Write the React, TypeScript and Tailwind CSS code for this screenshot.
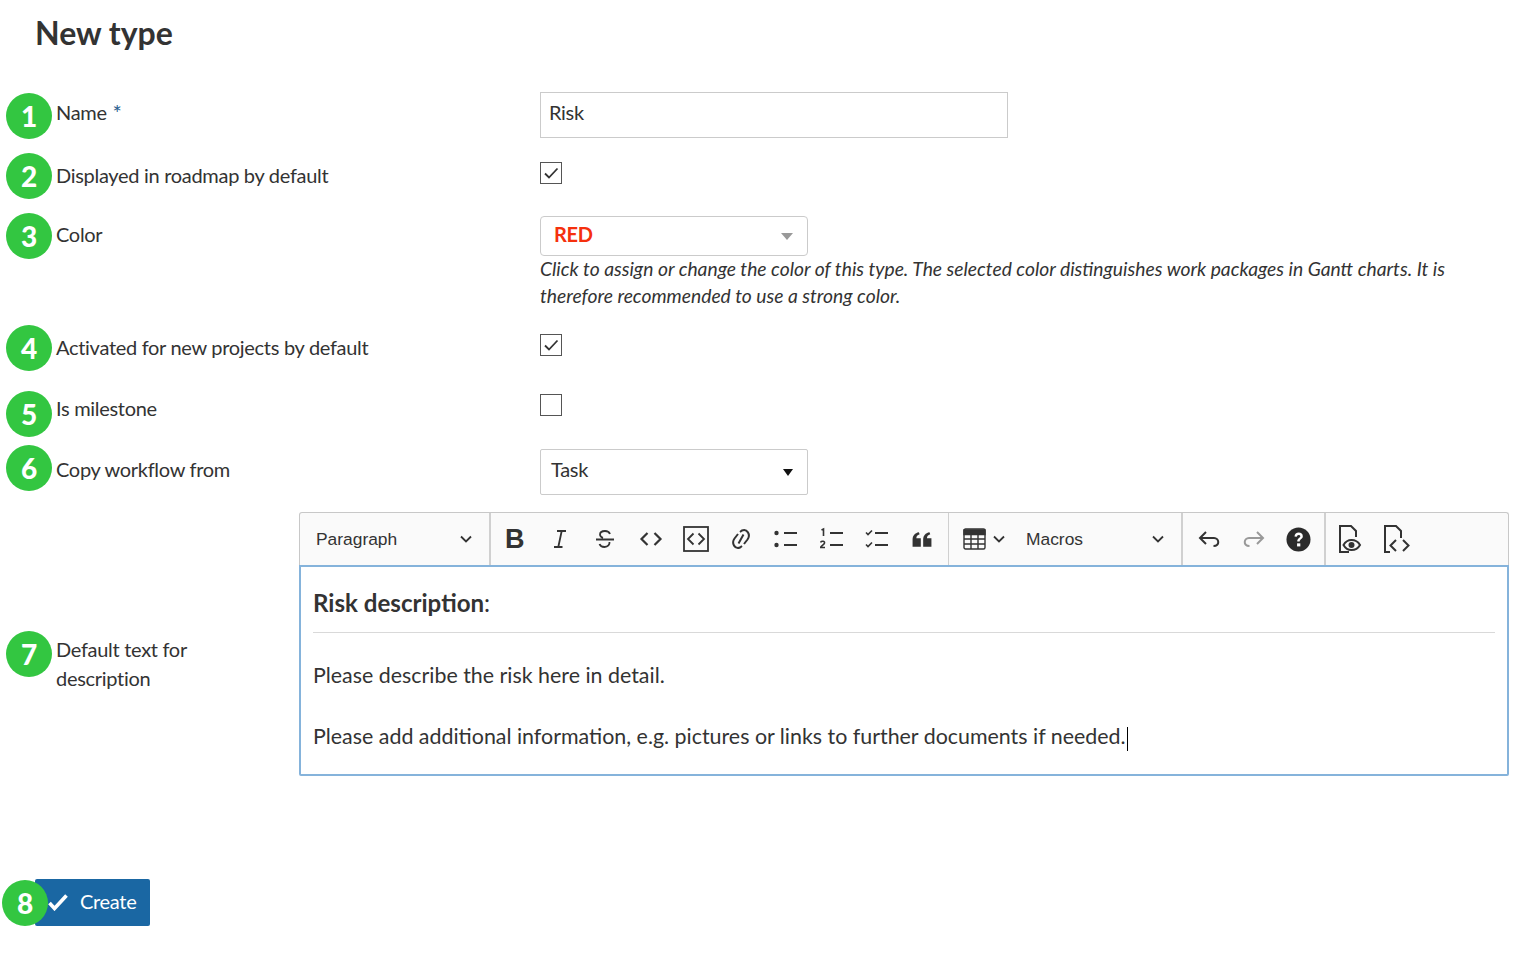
import React from "react";

const Badge = ({ n, className }: { n: number; className: string }) => (
  <div className={`absolute flex h-[46px] w-[46px] items-center justify-center rounded-full bg-[#33c641] text-[28px] font-black text-white ${className}`}>
    {n}
  </div>
);

const Checkbox = ({ checked }: { checked?: boolean }) => (
  <div className="flex h-[22px] w-[22px] items-center justify-center border border-[#555] bg-white">
    {checked && (
      <svg width="16" height="14" viewBox="0 0 16 14" fill="none" stroke="#333" strokeWidth="1.8">
        <path d="M2 7.5l4 4L14.5 2.5" />
      </svg>
    )}
  </div>
);

const Row = ({ label, children, className }: { label: React.ReactNode; children: React.ReactNode; className?: string }) => (
  <div className={`flex ${className ?? ""}`}>
    <div className="w-[484px] shrink-0">{label}</div>
    <div className="min-w-0 flex-1">{children}</div>
  </div>
);

const Chevron = ({ className }: { className?: string }) => (
  <svg className={className} width="12" height="8" viewBox="0 0 12 8" fill="none" stroke="#333" strokeWidth="1.8">
    <path d="M1 1.5l5 5 5-5" />
  </svg>
);

const Tool = ({ children }: { children: React.ReactNode }) => (
  <div className="flex h-full w-[45.3px] shrink-0 items-center justify-center">{children}</div>
);

const svgProps = { width: 28, height: 28, viewBox: "0 0 28 28", fill: "none", stroke: "#333" };
const listProps = { width: 24, height: 24, viewBox: "0 0 24 24", fill: "none", stroke: "#333" };

export default function App() {
  return (
    <div className="relative h-[961px] w-[1525px] overflow-hidden bg-white font-['Lato',sans-serif] text-[20px] tracking-[-0.3px] text-[#333]">
      <h1 className="pl-[35px] pt-[13px] text-[32px] leading-[40px] font-bold tracking-normal text-[#333]">New type</h1>

      <div className="pl-[56px] pt-[39px]">
        <Row label={<div className="pt-[6px] leading-[28px]">Name <span className="relative top-[1px] ml-[1px] text-[22px] text-[#2a5f8f]">*</span></div>}>
          <div className="flex h-[46px] w-[468px] items-center border border-[#cbcbcb] px-[8px] pb-[7px]">Risk</div>
        </Row>
        <Row className="mt-[24px]" label={<div className="-mt-[1px] leading-[28px]">Displayed in roadmap by default</div>}>
          <Checkbox checked />
        </Row>
        <Row className="mt-[27px]" label={<div className="pt-[4px] leading-[28px]">Color</div>}>
          <div className="flex h-[40px] w-[268px] items-center justify-between rounded-[4px] border border-[#cbcbcb] pb-[4px] pl-[13px] pr-[14px]">
            <span className="font-bold text-[#f5300d]">RED</span>
            <span className="mt-[4px] h-0 w-0 border-x-[6.5px] border-t-[7px] border-x-transparent border-t-[#999]" />
          </div>
          <p className="-mt-[1px] text-[19.27px] leading-[27px] tracking-normal italic">
            Click to assign or change the color of this type. The selected color distinguishes work packages in Gantt charts. It is
            <br />
            therefore recommended to use a strong color.
          </p>
        </Row>
        <Row className="mt-[25px]" label={<div className="-mt-[1px] leading-[28px]">Activated for new projects by default</div>}>
          <Checkbox checked />
        </Row>
        <Row className="mt-[33px]" label={<div className="leading-[28px]">Is milestone</div>}>
          <Checkbox />
        </Row>
        <Row className="mt-[27px]" label={<div className="pt-[6px] leading-[28px]">Copy workflow from</div>}>
          <div className="flex h-[46px] w-[268px] items-center justify-between rounded-[2px] border border-[#cbcbcb] pb-[6px] pl-[10px] pr-[14px]">
            <span>Task</span>
            <span className="mt-[6px] h-0 w-0 border-x-[5px] border-t-[7px] border-x-transparent border-t-[#111]" />
          </div>
        </Row>
      </div>

      <div className="flex pl-[56px] pt-[17px]">
        <div className="flex w-[243px] shrink-0 flex-col justify-center pt-[39px] leading-[29px]">
          <div>Default text for</div>
          <div>description</div>
        </div>
        <div className="w-[1210px]">
          <div className="flex h-[53px] items-stretch rounded-t-[3px] border border-b-0 border-[#c8c8c8] bg-[#fafafa]">
            <div className="flex w-[191px] items-center justify-between border-r-2 border-[#d0d0d0] pl-[16px] pr-[17px] font-['Liberation_Sans',sans-serif] text-[17.4px] tracking-normal">
              Paragraph
              <Chevron />
            </div>
            <div className="flex w-[458px] items-center border-r border-[#d0d0d0] pl-[1px]">
              <Tool>
                <span className="font-['Liberation_Sans',sans-serif] text-[27px] font-bold">B</span>
              </Tool>
              <Tool>
                <svg {...svgProps} strokeWidth="1.8">
                  <path d="M11 6h9M15.7 6l-3.4 16M8 22h8.5" />
                </svg>
              </Tool>
              <Tool>
                <svg {...svgProps} strokeWidth="1.8">
                  <path d="M19 9c-.8-2-2.6-3-5-3-3 0-5 1.400-5 3.600 0 1.600 1 2.600 3 3.200M5 14.500h18M18.500 17c.3 2.600-1.500 5-5 5-2.500 0-4.300-1-5-3" />
                </svg>
              </Tool>
              <Tool>
                <svg {...svgProps} strokeWidth="2.2">
                  <path d="M10.500 8L4.500 14l6 6M17.500 8l6 6-6 6" />
                </svg>
              </Tool>
              <Tool>
                <svg width="26" height="26" viewBox="0 0 26 26" fill="none" stroke="#333">
                  <rect x="1" y="1" width="24" height="24" strokeWidth="1.800" />
                  <path d="M10.500 7.500L5 13l5.500 5.500M15.500 7.500L21 13l-5.500 5.500" strokeWidth="1.800" />
                </svg>
              </Tool>
              <Tool>
                <svg {...svgProps} strokeWidth="2">
                  <path d="M11 9l-3.500 4.500c-3.500 5 .5 11 5.500 9l2-1.500M17 19l3.500-4.500c3.500-5-.5-11-5.500-9l-2 1.500M11.500 18.500l5-9" />
                </svg>
              </Tool>
              <Tool>
                <svg {...listProps} strokeWidth="2">
                  <circle cx="2.500" cy="6" r="2.200" fill="#333" stroke="none" />
                  <circle cx="2.500" cy="18" r="2.200" fill="#333" stroke="none" />
                  <path d="M10 6h13M10 18h13" />
                </svg>
              </Tool>
              <Tool>
                <svg {...listProps} strokeWidth="2">
                  <path d="M10 6h13M10 18h13" />
                  <path d="M1.500 3l2-1v7" strokeWidth="1.600" />
                  <path d="M0.500 15.500c1-2 4.500-1.600 4 .5-.3 1.500-3 2.500-4 4.500h4.500" strokeWidth="1.500" />
                </svg>
              </Tool>
              <Tool>
                <svg {...listProps} strokeWidth="2">
                  <path d="M10 6h13M10 18h13" />
                  <path d="M1 5.500l2 2L7 3.500M1 17.500l2 2L7 15.500" strokeWidth="1.600" />
                </svg>
              </Tool>
              <Tool>
                <svg width="22" height="22" viewBox="0 0 28 28" stroke="none" fill="#333">
                  <path d="M2 24v-9C2 9.500 5 6.500 10 5.500l1 2.500C8 9 7 10.500 6.800 13H12.500v11zM15.500 24v-9c0-5.500 3-8.500 8-9.500l1 2.500c-3 1-4 2.500-4.200 5H26v11z" />
                </svg>
              </Tool>
            </div>
            <div className="flex w-[234px] items-center border-r-2 border-[#d0d0d0] pl-[14px] font-['Liberation_Sans',sans-serif] text-[17.4px] tracking-normal">
              <svg width="23" height="22" viewBox="0 0 23 22" fill="none" stroke="#333" strokeWidth="1.400">
                <rect x="1" y="1" width="21" height="20" rx="1.500" />
                <path d="M1 2h21v4.500H1z" fill="#333" />
                <path d="M1 11h21M1 16h21M8 6v15M15 6v15" />
              </svg>
              <Chevron className="ml-[7px]" />
              <span className="ml-[21px] w-[126px]">Macros</span>
              <Chevron />
            </div>
            <div className="flex w-[143px] items-center border-r-2 border-[#d0d0d0] pl-[4px]">
              <Tool>
                <svg {...svgProps} strokeWidth="2">
                  <path d="M10 7l-6 6 6 6M4 13h14c5 0 6.500 8-.5 8" />
                </svg>
              </Tool>
              <div className="-ml-[2px]">
                <Tool>
                  <svg {...svgProps} stroke="#999" strokeWidth="2">
                    <path d="M18 7l6 6-6 6M24 13H10c-5 0-6.500 8 .5 8" />
                  </svg>
                </Tool>
              </div>
              <Tool>
                <svg width="25" height="25" viewBox="0 0 26 26">
                  <circle cx="13" cy="13" r="12.500" fill="#2b2b2b" />
                  <path d="M8.800 10c.2-2.800 2-4.200 4.400-4.200 2.500 0 4.300 1.500 4.300 3.700 0 3-3.300 3-3.300 5.700h-2.500c0-3.700 3.200-3.800 3.200-5.500 0-.9-.7-1.500-1.700-1.500-1.200 0-1.800.8-2 2z" fill="#fff" />
                  <rect x="11.500" y="17" width="3.400" height="3.200" fill="#fff" />
                </svg>
              </Tool>
            </div>
            <div className="flex items-center pl-[2px]">
              <Tool>
                <svg {...svgProps} strokeWidth="2">
                  <path d="M12 27H3V1h11l5 5v6" />
                  <path d="M6.500 20c2-3.500 4.800-5 8-5s6.500 1.500 8.500 5c-2 3.500-5.300 5-8.500 5s-6-1.500-8-5z" />
                  <circle cx="14.500" cy="20" r="3" fill="#333" stroke="none" />
                </svg>
              </Tool>
              <Tool>
                <svg {...svgProps} strokeWidth="2">
                  <path d="M8 27H3V1h11l5 5v7" />
                  <path d="M14 15l-5.500 5.500L14 26M21 15l5.500 5.500L21 26" />
                </svg>
              </Tool>
            </div>
          </div>
          <div className="h-[211px] rounded-b-[2px] border-2 border-[#85b3db] px-[12px] text-[21.4px] tracking-normal">
            <div className="flex h-[66px] items-center border-b border-[#d9d9d9] pt-[7px] text-[24.1px] font-bold">Risk description<span className="font-normal">:</span></div>
            <p className="pt-[27px] leading-[30px]">Please describe the risk here in detail.</p>
            <p className="pt-[31px] leading-[30px]">
              Please add additional information, e.g. pictures or links to further documents if needed.
              <span className="ml-[1px] inline-block h-[24px] w-px bg-black align-middle" />
            </p>
          </div>
        </div>
      </div>

      <div className="pl-[35px] pt-[103px]">
        <div className="flex h-[47px] w-[115px] items-center rounded-[2px] bg-[#1a67a3] pb-[3px] pl-[13px] text-white">
          <svg className="mt-[3px]" width="20" height="17" viewBox="0 0 20 17" fill="none" stroke="#fff" strokeWidth="3.6">
            <path d="M1.500 9l5 5.500L18.500 1.500" />
          </svg>
          <span className="ml-[12px]">Create</span>
        </div>
      </div>

      <Badge n={1} className="left-[6px] top-[93px]" />
      <Badge n={2} className="left-[6px] top-[153px]" />
      <Badge n={3} className="left-[6px] top-[213px]" />
      <Badge n={4} className="left-[6px] top-[325px]" />
      <Badge n={5} className="left-[6px] top-[391px]" />
      <Badge n={6} className="left-[6px] top-[445px]" />
      <Badge n={7} className="left-[6px] top-[631px]" />
      <Badge n={8} className="left-[2px] top-[880px]" />
    </div>
  );
}
